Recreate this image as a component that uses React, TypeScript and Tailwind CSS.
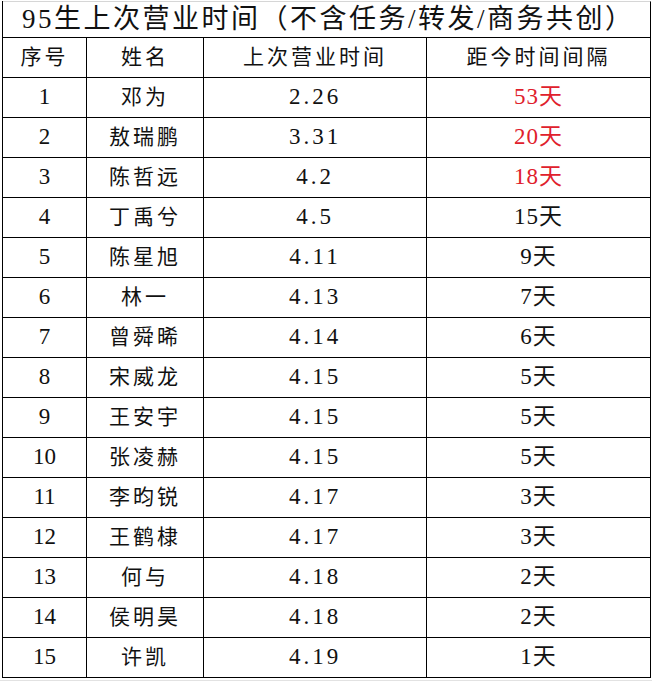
const rows = [
  { id: 1, name: "邓为", date: "2.26", gap: "53天", red: true },
  { id: 2, name: "敖瑞鹏", date: "3.31", gap: "20天", red: true },
  { id: 3, name: "陈哲远", date: "4.2", gap: "18天", red: true },
  { id: 4, name: "丁禹兮", date: "4.5", gap: "15天" },
  { id: 5, name: "陈星旭", date: "4.11", gap: "9天" },
  { id: 6, name: "林一", date: "4.13", gap: "7天" },
  { id: 7, name: "曾舜晞", date: "4.14", gap: "6天" },
  { id: 8, name: "宋威龙", date: "4.15", gap: "5天" },
  { id: 9, name: "王安宇", date: "4.15", gap: "5天" },
  { id: 10, name: "张凌赫", date: "4.15", gap: "5天" },
  { id: 11, name: "李昀锐", date: "4.17", gap: "3天" },
  { id: 12, name: "王鹤棣", date: "4.17", gap: "3天" },
  { id: 13, name: "何与", date: "4.18", gap: "2天" },
  { id: 14, name: "侯明昊", date: "4.18", gap: "2天" },
  { id: 15, name: "许凯", date: "4.19", gap: "1天" },
];

const cols = "grid grid-cols-[84px_117px_223px_224px] h-[40px]";
const cell = "flex items-center justify-center border-r border-b border-black";

export default function App() {
  return (
    <div
      className="w-[652px] h-[682px] bg-white overflow-hidden text-[#111]"
      style={{ fontFamily: '"Liberation Serif", "Noto Sans CJK SC", serif' }}
    >
      <div className="ml-[2px] mt-[1px] w-[649px] border-l border-black">
        {/* Title */}
        <div className="h-[37px] border-t border-t-[#d6d6d6] border-r border-b border-black flex items-center pl-[19px] text-[27px] tracking-[2.5px] leading-none">
          95生上次营业时间（不含任务/转发/商务共创）
        </div>

        {/* Header */}
        <div className={cols}>
          <div className={`${cell} text-[21px] tracking-[3px]`}>序号</div>
          <div className={`${cell} text-[21px] tracking-[3px]`}>姓名</div>
          <div className={`${cell} text-[21px] tracking-[3px]`}>上次营业时间</div>
          <div className={`${cell} text-[21px] tracking-[3px]`}>距今时间间隔</div>
        </div>

        {/* Rows */}
        {rows.map((r) => (
          <div key={r.id} className={cols}>
            <div className={`${cell} text-[23px]`}>{r.id}</div>
            <div className={`${cell} text-[21px] tracking-[3px]`}>{r.name}</div>
            <div className={`${cell} text-[23px] tracking-[3px]`}>{r.date}</div>
            <div className={`${cell} text-[23px] tracking-[1px] ${r.red ? "text-[#e0202c]" : ""}`}>
              {r.gap}
            </div>
          </div>
        ))}
      </div>
      <div className="mt-[2px] h-px bg-[#e2e2e2]" />
    </div>
  );
}
